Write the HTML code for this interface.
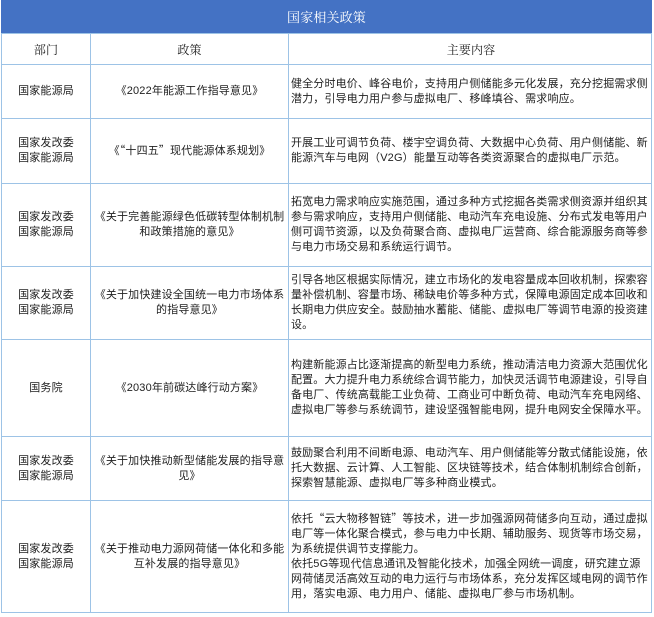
<!DOCTYPE html>
<html><head><meta charset="utf-8"><style>
*{margin:0;padding:0;box-sizing:border-box}
body{width:654px;height:617px;background:#fff;font-family:"Liberation Sans","Noto Sans CJK SC",sans-serif;color:#222;font-size:11px;letter-spacing:0.15px;position:relative;overflow:hidden}
.title{position:absolute;left:1px;top:0;width:651px;height:33px;background:#4472c4;color:#fff;font-family:"Noto Serif CJK SC",serif;font-size:13px;text-align:center;line-height:33px}
table{position:absolute;left:1px;top:33px;width:651px;border-collapse:collapse;table-layout:fixed}
td{border:1px solid #9dc3e6;vertical-align:middle;line-height:15px;overflow:hidden}
td.a{text-align:center}
td.b{text-align:center;padding:0 1px}
td.c{text-align:left;padding:0 0 0 2px}
tr.h td{font-family:"Noto Serif CJK SC",serif;font-size:12px}
.q{font-family:"Noto Sans CJK SC",sans-serif}
</style></head><body>
<div class="title">国家相关政策</div>
<table>
<colgroup><col style="width:89px"><col style="width:198px"><col></colgroup>
<tr class="h" style="height:31px"><td class="a">部门</td><td class="b">政策</td><td class="c" style="text-align:center">主要内容</td></tr>
<tr style="height:54px"><td class="a">国家能源局</td><td class="b">《2022年能源工作指导意见》</td><td class="c">健全分时电价、峰谷电价，支持用户侧储能多元化发展，充分挖掘需求侧潜力，引导电力用户参与虚拟电厂、移峰填谷、需求响应。</td></tr>
<tr style="height:65px"><td class="a">国家发改委<br>国家能源局</td><td class="b">《<span class="q">“</span>十四五<span class="q">”</span>现代能源体系规划》</td><td class="c">开展工业可调节负荷、楼宇空调负荷、大数据中心负荷、用户侧储能、新能源汽车与电网（V2G）能量互动等各类资源聚合的虚拟电厂示范。</td></tr>
<tr style="height:83px"><td class="a">国家发改委<br>国家能源局</td><td class="b">《关于完善能源绿色低碳转型体制机制和政策措施的意见》</td><td class="c">拓宽电力需求响应实施范围，通过多种方式挖掘各类需求侧资源并组织其参与需求响应，支持用户侧储能、电动汽车充电设施、分布式发电等用户侧可调节资源，以及负荷聚合商、虚拟电厂运营商、综合能源服务商等参与电力市场交易和系统运行调节。</td></tr>
<tr style="height:73px"><td class="a">国家发改委<br>国家能源局</td><td class="b">《关于加快建设全国统一电力市场体系的指导意见》</td><td class="c">引导各地区根据实际情况，建立市场化的发电容量成本回收机制，探索容量补偿机制、容量市场、稀缺电价等多种方式，保障电源固定成本回收和长期电力供应安全。鼓励抽水蓄能、储能、虚拟电厂等调节电源的投资建设。</td></tr>
<tr style="height:97px"><td class="a">国务院</td><td class="b">《2030年前碳达峰行动方案》</td><td class="c">构建新能源占比逐渐提高的新型电力系统，推动清洁电力资源大范围优化配置。大力提升电力系统综合调节能力，加快灵活调节电源建设，引导自备电厂、传统高载能工业负荷、工商业可中断负荷、电动汽车充电网络、虚拟电厂等参与系统调节，建设坚强智能电网，提升电网安全保障水平。</td></tr>
<tr style="height:64px"><td class="a">国家发改委<br>国家能源局</td><td class="b">《关于加快推动新型储能发展的指导意见》</td><td class="c">鼓励聚合利用不间断电源、电动汽车、用户侧储能等分散式储能设施，依托大数据、云计算、人工智能、区块链等技术，结合体制机制综合创新，探索智慧能源、虚拟电厂等多种商业模式。</td></tr>
<tr style="height:112px"><td class="a">国家发改委<br>国家能源局</td><td class="b">《关于推动电力源网荷储一体化和多能互补发展的指导意见》</td><td class="c">依托<span class="q">“</span>云大物移智链<span class="q">”</span>等技术，进一步加强源网荷储多向互动，通过虚拟电厂等一体化聚合模式，参与电力中长期、辅助服务、现货等市场交易，为系统提供调节支撑能力。<br>依托5G等现代信息通讯及智能化技术，加强全网统一调度，研究建立源网荷储灵活高效互动的电力运行与市场体系，充分发挥区域电网的调节作用，落实电源、电力用户、储能、虚拟电厂参与市场机制。</td></tr>
</table>
</body></html>
